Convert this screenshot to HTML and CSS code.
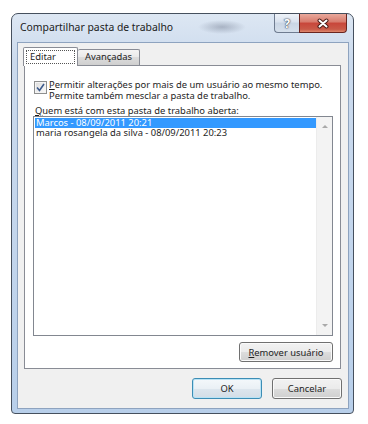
FILE: index.html
```html
<!DOCTYPE html>
<html lang="pt-BR">
<head>
    <meta charset="UTF-8">
    <meta name="viewport" content="width=device-width, initial-scale=1.0">
    <title>Compartilhar pasta de trabalho</title>
    <link rel="stylesheet" href="styles.css">
</head>
<body>
    <div class="window">
        <div class="titlebar">
            <span class="title">Compartilhar pasta de trabalho</span>
            <div class="caption-buttons">
                <div class="cap-btn help">?</div>
                <div class="cap-btn close">
                    <svg width="14" height="11" viewBox="0 0 14 11">
                        <path d="M3.5 2.5 L10.5 8.5 M10.5 2.5 L3.5 8.5" stroke="#4a1a16" stroke-width="4" stroke-linecap="round"/>
                        <path d="M3.5 2.5 L10.5 8.5 M10.5 2.5 L3.5 8.5" stroke="#ffffff" stroke-width="2" stroke-linecap="round"/>
                    </svg>
                </div>
            </div>
        </div>

        <div class="client">
            <div class="tabs">
                <div class="tab active"><span class="focus">Editar</span></div>
                <div class="tab">Avançadas</div>
            </div>

            <div class="panel">
                <div class="check-row">
                    <span class="checkbox">
                        <svg width="9" height="9" viewBox="0 0 9 9">
                            <path d="M1 4.5 L3.5 7.5 L8 1" fill="none" stroke="#3c5a8c" stroke-width="1.6"/>
                        </svg>
                    </span>
                    <label class="check-text"><u>P</u>ermitir alterações por mais de um usuário ao mesmo tempo.<br>Permite também mesclar a pasta de trabalho.</label>
                </div>

                <div class="list-label"><u>Q</u>uem está com esta pasta de trabalho aberta:</div>

                <div class="listbox">
                    <div class="items">
                        <div class="item selected">Marcos - 08/09/2011 20:21</div>
                        <div class="item">maria rosangela da silva - 08/09/2011 20:23</div>
                    </div>
                    <div class="scrollbar">
                        <span class="arrow up"></span>
                        <span class="arrow down"></span>
                    </div>
                </div>

                <div class="panel-actions">
                    <button class="btn remove"><u>R</u>emover usuário</button>
                </div>
            </div>

            <div class="footer">
                <button class="btn default">OK</button>
                <button class="btn">Cancelar</button>
            </div>
        </div>
    </div>
</body>
</html>
```

FILE: styles.css
```css
/* Windows 7 style dialog */
* {
    box-sizing: border-box;
}
body {
    margin: 0;
    background: #ffffff;
    font-family: "Noto Sans", sans-serif;
    font-size: 9.4px;
    color: #1e1e1e;
}
u {
    text-decoration: underline;
    text-underline-offset: 1px;
}

.window {
    margin: 13px 0 0 11px;
    width: 343px;
    height: 401px;
    border: 1px solid #46505e;
    border-radius: 7px 7px 4px 4px;
    padding: 0 4px 4px 5px;
    display: flex;
    flex-direction: column;
    background:
        radial-gradient(ellipse 24px 7px at 210px 13px, rgba(110, 120, 140, 0.45), rgba(110, 120, 140, 0) 100%),
        linear-gradient(#dde7f3, #cbdaed 12%, #c2d5ec 60%, #b8cfea);
}

/* title bar */
.titlebar {
    height: 28px;
    display: flex;
    justify-content: space-between;
    align-items: flex-start;
}
.title {
    padding: 6px 0 0 3px;
    font-size: 10.4px;
    color: #1b1b1b;
}
.caption-buttons {
    display: flex;
    margin-right: 2px;
}
.cap-btn {
    height: 19px;
    display: flex;
    align-items: center;
    justify-content: center;
    border: 1px solid #6f7c90;
    border-top: none;
}
.help {
    width: 25px;
    border-right: none;
    border-radius: 0 0 0 4px;
    background: linear-gradient(#eef2f8, #d9e2ee 45%, #c9d5e4 50%, #d6e0ec);
    color: #ffffff;
    font-size: 12px;
    font-weight: bold;
    text-shadow: 0 0 1px #4b5566, 0 0 1px #4b5566, 0 0 2px #4b5566;
}
.close {
    width: 48px;
    border-color: #6a2620;
    border-radius: 0 0 4px 0;
    background: linear-gradient(#e9a99c, #d77a6c 45%, #c8463a 50%, #c95a48 85%, #df8a6f);
}

/* client area */
.client {
    flex: 1;
    background: #f0f0f0;
    border: 1px solid #8ea3bf;
    padding: 4px 0 0 0;
    display: flex;
    flex-direction: column;
}

.tabs {
    display: flex;
    align-items: flex-end;
    height: 18px;
    margin-left: 5px;
}
.tab {
    height: 16px;
    padding: 0 7px;
    border: 1px solid #898c95;
    border-bottom: none;
    border-left: none;
    border-radius: 2px 2px 0 0;
    background: linear-gradient(#f4f4f4, #e9e9e9 50%, #dcdcdc 50%, #cfcfcf);
    line-height: 14px;
}
.tab.active {
    width: 55px;
    height: 19px;
    margin-bottom: -1px;
    padding: 2px 2px 0 2px;
    border-left: 1px solid #898c95;
    background: #ffffff;
    position: relative;
    z-index: 1;
}
.focus {
    display: block;
    height: 14px;
    padding-left: 3px;
    border: 1px dotted #555555;
    line-height: 12px;
}

.panel {
    margin: 0 7px 0 6px;
    height: 304px;
    border: 1px solid #898c95;
    background: #ffffff;
    padding: 14px 7px 6px 8px;
    display: flex;
    flex-direction: column;
}

.check-row {
    display: flex;
    gap: 2px;
    margin-left: 1px;
}
.checkbox {
    flex: none;
    width: 13px;
    height: 13px;
    margin-top: 1px;
    border: 1px solid #8e8f8f;
    background: linear-gradient(135deg, #dcdcdc, #fbfbfb);
    display: flex;
    align-items: center;
    justify-content: center;
    box-shadow: inset 0 0 0 1px #f4f4f4;
}
.check-text {
    line-height: 10.5px;
}

.list-label {
    margin: 5px 0 0 2px;
    line-height: 10px;
}

.listbox {
    height: 220px;
    border: 1px solid #828790;
    padding: 1px 0 0 1px;
    display: flex;
}
.items {
    flex: 1;
}
.item {
    height: 10px;
    line-height: 10px;
    padding-left: 1px;
    white-space: nowrap;
}
.item.selected {
    background: #3399ff;
    color: #ffffff;
}
.scrollbar {
    width: 16px;
    margin-top: -1px;
    background: #f3f3f3;
    border-left: 1px solid #ececec;
    display: flex;
    flex-direction: column;
    justify-content: space-between;
    align-items: center;
    padding: 8px 0 8px 0;
}
.arrow {
    width: 0;
    height: 0;
    border-left: 3px solid transparent;
    border-right: 3px solid transparent;
}
.arrow.up {
    border-bottom: 3px solid #a9a9a9;
}
.arrow.down {
    border-top: 3px solid #a9a9a9;
}

.panel-actions {
    display: flex;
    justify-content: flex-end;
    margin-top: 6px;
}

.btn {
    height: 20px;
    padding: 0;
    border: 1px solid #707070;
    border-radius: 3px;
    background: linear-gradient(#f2f2f2, #ebebeb 50%, #dddddd 50%, #cfcfcf);
    box-shadow: inset 0 0 0 1px #fafafa;
    font-family: "Noto Sans", sans-serif;
    font-size: 9.4px;
    color: #1e1e1e;
}
.remove {
    width: 94px;
}

.footer {
    display: flex;
    justify-content: flex-end;
    gap: 10px;
    margin-top: 9px;
    padding-right: 6px;
}
.footer .btn {
    width: 70px;
    height: 21px;
}
.btn.default {
    border-color: #3c8db5;
    box-shadow: inset 0 0 0 1px #b9e3f5;
    background: linear-gradient(#f4f8fb, #eaf0f5 50%, #dde6ee 50%, #d3dde6);
}
```
